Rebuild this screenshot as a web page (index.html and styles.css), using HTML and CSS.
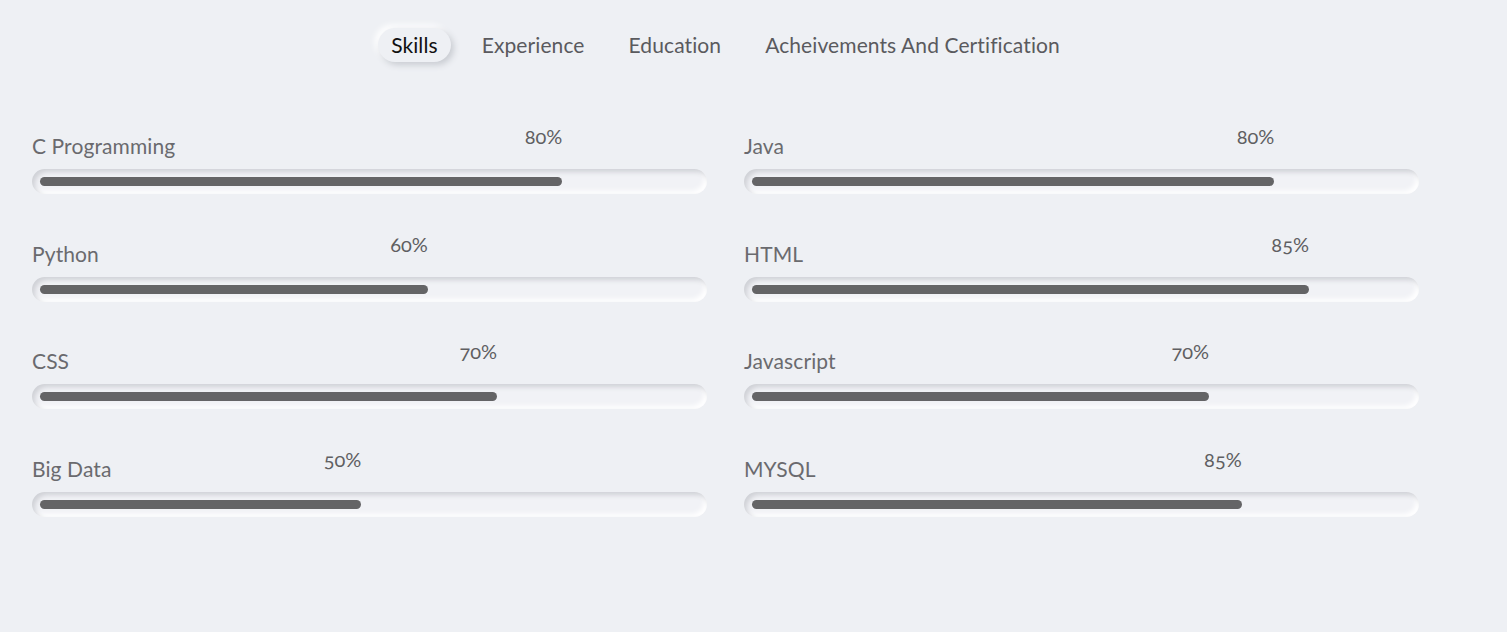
FILE: index.html
```html
<!DOCTYPE html>
<html lang="en">
<head>
<meta charset="utf-8">
<title>Skills</title>
<link rel="stylesheet" href="styles.css">
</head>
<body>
<div class="page">
  <nav class="tabs">
    <span class="tab active">Skills</span>
    <span class="tab">Experience</span>
    <span class="tab">Education</span>
    <span class="tab">Acheivements And Certification</span>
  </nav>
  <section class="skills">
    <div class="skill">
      <div class="name">C Programming</div>
      <div class="bar"><div class="fill" style="width:80%"><span class="pct">80%</span></div></div>
    </div>
    <div class="skill">
      <div class="name">Java</div>
      <div class="bar"><div class="fill" style="width:80%"><span class="pct">80%</span></div></div>
    </div>
    <div class="skill">
      <div class="name">Python</div>
      <div class="bar"><div class="fill" style="width:59.4%"><span class="pct">60%</span></div></div>
    </div>
    <div class="skill">
      <div class="name">HTML</div>
      <div class="bar"><div class="fill" style="width:85.3%"><span class="pct">85%</span></div></div>
    </div>
    <div class="skill">
      <div class="name">CSS</div>
      <div class="bar"><div class="fill" style="width:70%"><span class="pct">70%</span></div></div>
    </div>
    <div class="skill">
      <div class="name">Javascript</div>
      <div class="bar"><div class="fill" style="width:70%"><span class="pct">70%</span></div></div>
    </div>
    <div class="skill">
      <div class="name">Big Data</div>
      <div class="bar"><div class="fill" style="width:49.2%"><span class="pct">50%</span></div></div>
    </div>
    <div class="skill">
      <div class="name">MYSQL</div>
      <div class="bar"><div class="fill" style="width:75%"><span class="pct">85%</span></div></div>
    </div>
  </section>
</div>
</body>
</html>
```

FILE: styles.css
```css
* { box-sizing: border-box; }

html, body {
  margin: 0;
  padding: 0;
  background: #eef0f4;
  font-family: "Lato", "Open Sans", "Liberation Sans", sans-serif;
  font-variant-numeric: oldstyle-nums;
}

.page {
  width: 1387px;
  margin-left: 32px;
  padding-top: 28px;
}

.tabs {
  display: flex;
  justify-content: center;
  gap: 18px;
  height: 34px;
}

.tab {
  padding: 0 13px;
  line-height: 33px;
  font-size: 21px;
  letter-spacing: 0.1px;
  color: #5a5a5e;
  border-radius: 17px;
}

.tab.active {
  color: #111;
  background: #eef0f4;
  box-shadow: 3px 3px 6px #c9ccd2, -3px -3px 6px #ffffff;
}

.skills {
  margin-top: 72px;
  display: grid;
  grid-template-columns: 675px 675px;
  column-gap: 37px;
  row-gap: 47.5px;
}

.name {
  font-size: 21px;
  letter-spacing: 0.1px;
  line-height: 23px;
  color: #6a6a6e;
  margin-bottom: 12px;
}

.bar {
  height: 25px;
  border-radius: 13px;
  padding: 8px 14px 0 8px;
  background: #f1f2f6;
  box-shadow: inset 3px 3px 5px #cfd1d6, inset -3px -3px 5px #ffffff;
}

.fill {
  position: relative;
  height: 9px;
  border-radius: 5px;
  background: #646466;
}

.pct {
  position: absolute;
  right: 0;
  bottom: calc(100% + 29px);
  font-size: 20px;
  line-height: 24px;
  color: #5f5f62;
  white-space: nowrap;
}
```
